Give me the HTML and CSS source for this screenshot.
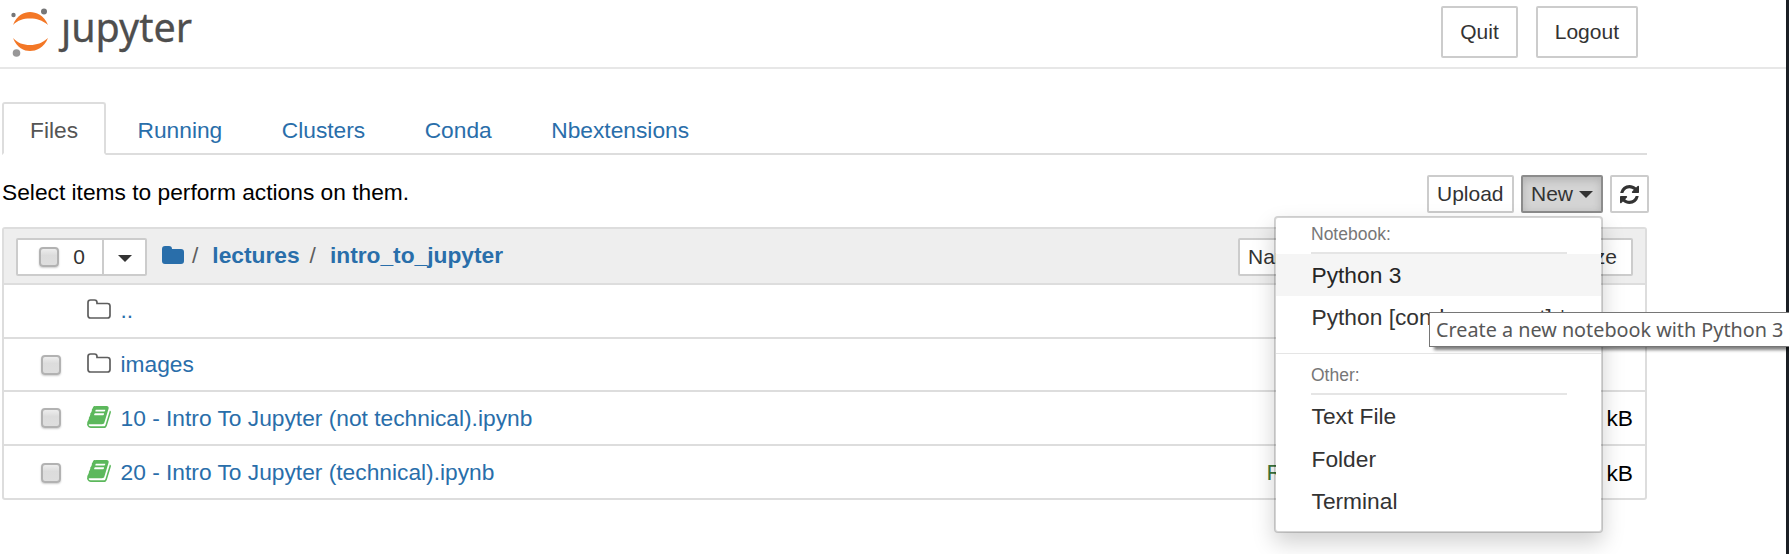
FILE: index.html
```html
<!DOCTYPE html>
<html lang="en">
<head>
<meta charset="utf-8">
<title>Jupyter</title>
<link rel="stylesheet" href="styles.css">
</head>
<body>
<svg class="defs" width="0" height="0">
  <symbol id="folder" viewBox="0 0 22 18"><path d="M0 3Q0 0 3 0H7Q10 0 10 3H19Q22 3 22 6V15Q22 18 19 18H3Q0 18 0 15Z" fill="currentColor"/></symbol>
  <symbol id="folder-o" viewBox="0 0 24 20"><path d="M1 3.5Q1 1 3.5 1H7.5Q10 1 10 3.5V4.5H20.5Q23 4.500 23 7V16.500Q23 19 20.500 19H3.500Q1 19 1 16.500Z" fill="none" stroke="currentColor" stroke-width="1.700"/></symbol>
  <symbol id="book" viewBox="0 0 1664 1536"><path fill="currentColor" d="M1639 350q40 57 18 129l-275 906q-19 64-76.500 107.500t-122.500 43.500h-923q-77 0-148.500-53.500t-99.500-131.500q-24-67-2-127 0-4 3-27t4-37q1-8-3-21.500t-3-19.500q2-11 8-21t16.500-23.500 16.500-23.500q23-38 45-91.500t30-91.500q3-10 .5-30t-.5-28q3-11 17-28t17-23q21-36 42-92t25-90q1-9-2.500-32t.5-28q4-13 22-30.500t22-22.500q19-26 42.500-84.500t27.500-96.500q1-8-3-25.500t-2-26.500q2-8 9-18t18-23 17-21q8-12 16.500-30.500t15-35 16-36 19.500-32 26.500-23.500 36-11.500 47.500 5.500l-1 3q38-9 51-9h761q74 0 114 56t18 130l-274 906q-36 119-71.500 153.500t-128.500 34.500h-869q-27 0-38 15-11 16-1 43 24 70 144 70h923q29 0 56-15.500t35-41.500l300-987q7-22 5-57 38 15 59 43zm-1064 2q-4 13 2 22.500t20 9.500h608q13 0 25.500-9.500t16.500-22.500l21-64q4-13-2-22.500t-20-9.500h-608q-13 0-25.500 9.500t-16.500 22.500zm-83 256q-4 13 2 22.500t20 9.500h608q13 0 25.500-9.500t16.500-22.500l21-64q4-13-2-22.500t-20-9.500h-608q-13 0-25.500 9.500t-16.500 22.500z"/></symbol>
</svg>
<div class="page">
  <header class="header">
    <div class="logo">
      <svg class="mark" width="38" height="50" viewBox="0 0 38 50">
        <path d="M2 17C6 7 13 4 19 4S33 7 37 17C31 12 26 10.500 19 10.500S7 12 2 17Z" fill="#f37726"/>
        <path d="M2 30C6 40 13 43 19 43S33 40 37 30C31 35 26 37 19 37S7 35 2 30Z" fill="#f37726"/>
        <circle cx="33" cy="3.500" r="3" fill="#767677"/><circle cx="2.500" cy="7" r="2.200" fill="#767677"/><circle cx="5.500" cy="45" r="3.800" fill="#989798"/>
      </svg>
      <span class="word"><span class="dotless">j</span>upyter</span>
    </div>
    <div class="session"><button class="btn big">Quit</button><button class="btn big">Logout</button></div>
  </header>
  <main class="main">
    <nav class="tabs"><a class="tab active">Files</a><a class="tab">Running</a><a class="tab">Clusters</a><a class="tab">Conda</a><a class="tab">Nbextensions</a></nav>
    <div class="toolbar">
      <span class="hint">Select items to perform actions on them.</span>
      <div class="actions">
        <button class="btn upload">Upload</button>
        <div class="drop">
          <button class="btn new">New <i class="caret"></i></button>
          <div class="menu">
            <div class="label">Notebook:</div>
            <a class="item hover">Python 3</a>
            <a class="item">Python [conda env:root] *</a>
            <div class="divider"></div>
            <div class="label">Other:</div>
            <a class="item">Text File</a>
            <a class="item">Folder</a>
            <a class="item">Terminal</a>
          </div>
        </div>
        <button class="btn refresh"><svg width="19" height="19" viewBox="0 0 1536 1536"><path fill="currentColor" d="M1511 928q0 5-1 7-64 268-268 434.500t-478 166.500q-146 0-282.500-55t-243.500-157l-129 129q-19 19-45 19t-45-19-19-45v-448q0-26 19-45t45-19h448q26 0 45 19t19 45-19 45l-137 137q71 66 161 102t187 36q134 0 250-65t186-179q11-17 53-117 8-23 30-23h192q13 0 22.500 9.500t9.500 22.500zm25-800v448q0 26-19 45t-45 19h-448q-26 0-45-19t-19-45 19-45l138-138q-148-137-349-137-134 0-250 65t-186 179q-11 17-53 117-8 23-30 23h-199q-13 0-22.500-9.500t-9.500-22.500v-7q65-268 270-434.500t480-166.500q146 0 284 55.500t245 156.500l130-129q19-19 45-19t45 19 19 45z"/></svg></button>
      </div>
    </div>
    <section class="list">
      <div class="row head">
        <div class="selector"><button class="btn all"><i class="check"></i><span>0</span></button><button class="btn pick"><i class="caret"></i></button></div>
        <div class="crumbs"><svg width="22" height="18"><use href="#folder"/></svg><span class="slash s1">/</span><a>lectures</a><span class="slash s2">/</span><a>intro_to_jupyter</a></div>
        <div class="sort"><button class="btn name">Name</button><button class="btn size">File size</button></div>
      </div>
      <div class="row"><i class="check none"></i><svg class="ic" width="24" height="20"><use href="#folder-o"/></svg><a class="file">..</a></div>
      <div class="row"><i class="check"></i><svg class="ic" width="24" height="20"><use href="#folder-o"/></svg><a class="file">images</a></div>
      <div class="row"><i class="check"></i><svg class="ic book" width="24" height="22"><use href="#book"/></svg><a class="file">10 - Intro To Jupyter (not technical).ipynb</a><span class="kb">kB</span></div>
      <div class="row"><i class="check"></i><svg class="ic book" width="24" height="22"><use href="#book"/></svg><a class="file">20 - Intro To Jupyter (technical).ipynb</a><span class="running">Running</span><span class="kb">kB</span></div>
    </section>
  </main>
</div>
<div class="tooltip">Create a new notebook with Python 3</div>
</body>
</html>
```
FILE: styles.css
```css
* { box-sizing: border-box; }
body { margin: 0; height: 554px; overflow: hidden; background: #1b1f24; font: 22.75px/32px "Liberation Sans", Arial, sans-serif; color: #000; position: relative; }
.defs { position: absolute; }
.page { width: 1786px; height: 554px; background: #fff; }
a { color: #296eaa; }
.header { height: 69px; border-bottom: 2px solid #e7e7e7; display: flex; justify-content: space-between; padding: 6px 148px 0 11px; }
.logo { display: flex; align-items: flex-start; }
.mark { margin-top: 2px; }
.word { font: 39.5px/44px "Noto Sans", sans-serif; color: #4e4e4e; margin: -1px 0 0 12px; -webkit-text-stroke: 0.3px #4e4e4e; }
.dotless { display: inline-block; clip-path: inset(14px -1px -12px -12px); }
.session { display: flex; gap: 18px; }
.btn { font: 21px/30px "Liberation Sans", Arial, sans-serif; color: #333; background: #fff; border: 2px solid #ccc; border-radius: 2px; height: 38px; padding: 0 8px; display: flex; align-items: center; white-space: nowrap; }
.btn.big { height: 52px; padding: 0 17px; }
.main { width: 1645px; margin-left: 2px; }
.tabs { margin-top: 33px; height: 53px; border-bottom: 2px solid #ddd; display: flex; }
.tab { height: 53px; padding: 10px 26px 0; border: 2px solid transparent; margin-right: 3.500px; }
.tab.active { color: #555; background: #fff; border-color: #ddd; border-bottom-color: #fff; border-radius: 3px 3px 0 0; width: 104px; }
.toolbar { height: 72px; padding-top: 20px; display: flex; justify-content: space-between; }
.actions { display: flex; gap: 7px; margin-right: -2px; }
.hint { padding-top: 1px; }
.upload { width: 87px; }
.drop { position: relative; }
.new { width: 82px; gap: 6px; background: #d4d4d4; border-color: #8c8c8c; box-shadow: inset 0 3px 8px rgba(0,0,0,.16); }
.refresh { width: 39px; }
.caret { border: 7px solid transparent; border-top-color: currentColor; border-bottom: 0; }
.menu { position: absolute; right: 0; top: 41px; width: 329px; height: 317px; background: #fff; background-clip: padding-box; border: 2px solid rgba(0,0,0,.17); border-radius: 4px; box-shadow: 0 10px 22px rgba(0,0,0,.18); z-index: 2; }
.label { font-size: 17.5px; line-height: 33px; height: 36px; color: #777; border-bottom: 2px solid #e5e5e5; margin: 0 34px 0 35px; }
.item { display: block; height: 42.800px; line-height: 42.500px; padding-left: 35.500px; color: #333; }
.hover { background: #f5f5f5; color: #262626; height: 42px; }
.divider { height: 1px; background: #e5e5e5; margin: 14px 0 5px; }
.list { border: 2px solid #ddd; border-radius: 3px; height: 273px; }
.row { height: 53.700px; border-bottom: 2px solid #ddd; display: flex; align-items: center; padding: 0 12px 0 37px; }
.row:last-child { border-bottom: 0; }
.row.head { height: 56px; background: #eee; padding: 0 12px; }
.selector { display: flex; margin-top: 2px; }
.all { width: 88px; padding: 0 17px 0 21px; justify-content: space-between; border-radius: 2px 0 0 2px; }
.pick { width: 45px; margin-left: -2px; padding: 2px 14px 0; border-radius: 0 2px 2px 0; }
.check { width: 20px; height: 20px; border: 2px solid #b2b2b2; border-radius: 4px; background: linear-gradient(#ededed, #dcdcdc 40%, #dedede); box-shadow: 0 1px 2px rgba(0,0,0,.2); }
.none { visibility: hidden; }
.ic { margin: -3px 9.500px 0 26px; color: #5e5e5e; }
.book { color: #5cb85c; }
.file { margin-top: -1px; }
.kb { margin-left: auto; }
.running { margin-left: 772px; color: #3c763d; margin-top: -2px; }
.crumbs { display: flex; align-items: center; margin: -2px 0 0 15px; color: #5e5e5e; font-weight: bold; }
.crumbs svg { color: #296eaa; }
.slash { font-weight: normal; }
.s1 { margin: 0 14px 0 8px; }
.s2 { margin: 0 14px 0 10px; }
.sort { margin: 2px 0 0 auto; width: 395px; display: flex; justify-content: space-between; }
.size { width: 104px; justify-content: flex-end; padding-right: 14px; }
.tooltip { position: absolute; left: 1429px; top: 312px; width: 370px; height: 35px; background: #fff; border: 1px solid #767676; box-shadow: 4px 4px 3px -1px rgba(0,0,0,.5); font: 19.800px/34px "Noto Sans", sans-serif; color: #575757; padding-left: 6px; white-space: nowrap; z-index: 5; }
```
